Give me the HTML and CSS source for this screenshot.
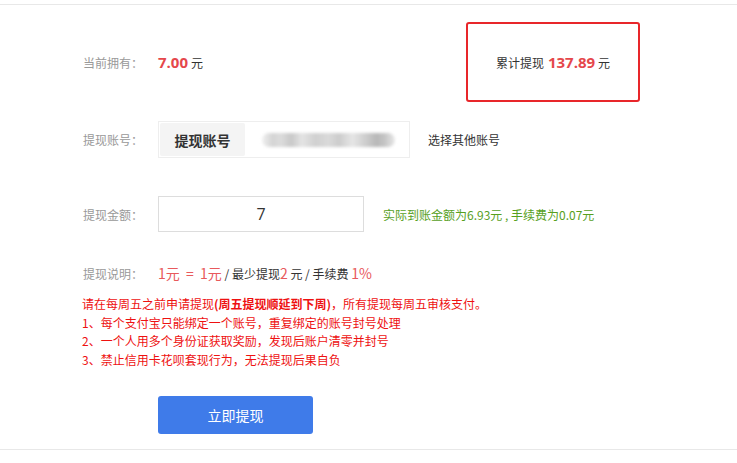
FILE: index.html
```html
<!DOCTYPE html>
<html lang="zh-CN">
<head>
    <meta charset="UTF-8">
    <meta name="viewport" content="width=device-width, initial-scale=1.0">
    <title>提现</title>
    <link rel="stylesheet" href="styles.css">
</head>
<body>
    <div class="panel">
        <div class="row row-balance">
            <div class="field">
                <span class="label">当前拥有：</span>
                <span class="money">7.00</span>
                <span class="unit">元</span>
            </div>
            <div class="total-box">
                <span>累计提现</span><span class="money">137.89</span><span class="unit">元</span>
            </div>
        </div>

        <div class="row row-account">
            <span class="label">提现账号：</span>
            <div class="account-box">
                <div class="account-tab">提现账号</div>
                <div class="account-no"></div>
            </div>
            <a class="account-other">选择其他账号</a>
        </div>

        <div class="row row-amount">
            <span class="label">提现金额：</span>
            <input type="text" class="amount-input" value="7">
            <span class="amount-tip">实际到账金额为6.93元 , 手续费为0.07元</span>
        </div>

        <div class="row row-desc">
            <span class="label">提现说明：</span>
            <span class="hl">1元&nbsp;&nbsp;=&nbsp;&nbsp;1元</span>
            <span class="desc-text">&nbsp;/ 最少提现</span><span class="hl">2</span>
            <span class="desc-text">&nbsp;元 / 手续费&nbsp;</span><span class="hl">1%</span>
        </div>

        <div class="notes">
            <p>请在每周五之前申请提现<b>(周五提现顺延到下周)</b>，所有提现每周五审核支付。</p>
            <p>1、每个支付宝只能绑定一个账号，重复绑定的账号封号处理</p>
            <p>2、一个人用多个身份证获取奖励，发现后账户清零并封号</p>
            <p>3、禁止信用卡花呗套现行为，无法提现后果自负</p>
        </div>

        <div class="actions">
            <button class="submit-btn">立即提现</button>
        </div>
    </div>
</body>
</html>
```

FILE: styles.css
```css
body {
    margin: 0;
    background: #ffffff;
    font-family: "Microsoft YaHei", "Noto Sans CJK SC", sans-serif;
    color: #333;
}
.panel {
    margin-top: 4px;
    height: 446px;
    border-top: 1px solid #e8e8e8;
    border-bottom: 1px solid #e8e8e8;
    padding-left: 83px;
    box-sizing: border-box;
}
.row {
    display: flex;
    align-items: center;
}
.label {
    width: 75px;
    flex-shrink: 0;
    font-size: 12px;
    color: #999;
}
.money {
    font-family: "Open Sans", "Noto Sans", sans-serif;
    font-weight: bold;
    font-size: 15px;
    color: #e5474b;
}
.unit {
    font-size: 12px;
    color: #333;
    margin-left: 3px;
}
.row-balance {
    margin-top: 17px;
    height: 80px;
    justify-content: space-between;
    padding-right: 97px;
}
.field {
    display: flex;
    align-items: center;
}
.total-box {
    width: 174px;
    height: 80px;
    box-sizing: border-box;
    border: 2px solid #e8262a;
    border-radius: 3px;
    display: flex;
    align-items: center;
    justify-content: center;
    font-size: 12px;
    color: #333;
}
.total-box .money {
    margin-left: 4px;
}
.row-account {
    margin-top: 19px;
}
.account-box {
    width: 252px;
    height: 37px;
    box-sizing: border-box;
    border: 1px solid #eeeeee;
    padding: 1px;
    display: flex;
    align-items: center;
}
.account-tab {
    width: 85px;
    height: 33px;
    background: #f4f4f4;
    border-radius: 2px;
    font-size: 14px;
    font-weight: bold;
    color: #333;
    display: flex;
    align-items: center;
    justify-content: center;
}
.account-no {
    margin-left: 17px;
    width: 133px;
    height: 14px;
    border-radius: 7px;
    background: linear-gradient(90deg, #f0f0f0 0%, #d4d4d4 8%, #dcdcdc 14%, #c8c8c8 22%, #e4e4e4 30%, #d0d0d0 40%, #dadada 50%, #cccccc 58%, #e6e6e6 68%, #d2d2d2 76%, #b8b8b8 86%, #c4c4c4 92%, #e8e8e8 100%);
    filter: blur(1.5px);
}
.account-other {
    margin-left: 18px;
    font-size: 12px;
    color: #333;
}
.row-amount {
    margin-top: 38px;
}
.amount-input {
    width: 206px;
    height: 36px;
    box-sizing: border-box;
    border: 1px solid #dddddd;
    text-align: center;
    font-size: 16px;
    color: #333;
    font-family: "Open Sans", "Noto Sans", sans-serif;
    outline: none;
    padding: 0;
}
.amount-tip {
    margin-left: 19px;
    font-size: 12px;
    color: #57a01e;
}
.row-desc {
    margin-top: 31px;
}
.hl {
    font-size: 14px;
    color: #e8595c;
}
.desc-text {
    font-size: 12px;
    color: #333;
}
.notes {
    margin-top: 12px;
    margin-left: -1px;
    color: #ee1111;
    font-size: 12px;
    line-height: 18.7px;
}
.notes p {
    margin: 0;
}
.actions {
    margin-top: 26px;
    padding-left: 75px;
}
.submit-btn {
    width: 155px;
    height: 38px;
    border: none;
    border-radius: 3px;
    background: #3f7be9;
    color: #fff;
    font-size: 14px;
    font-family: "Microsoft YaHei", "Noto Sans CJK SC", sans-serif;
}
```
